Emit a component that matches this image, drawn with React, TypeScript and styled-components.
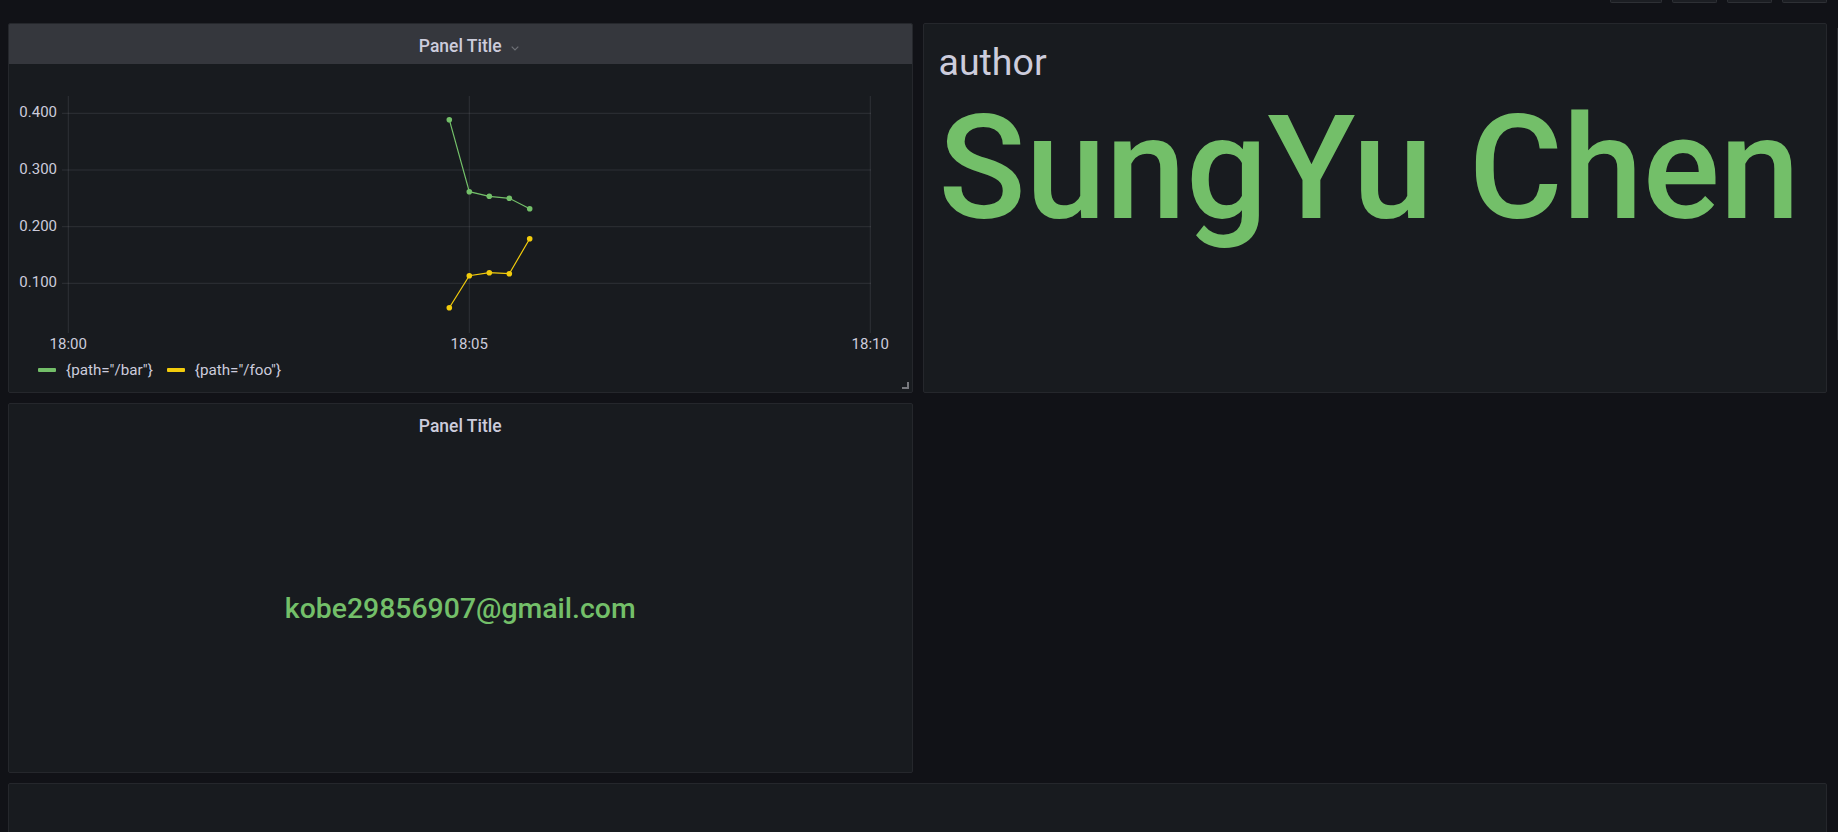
import React from "react";
import styled, { createGlobalStyle } from "styled-components";

const GlobalStyle = createGlobalStyle`
  html, body {
    margin: 0;
    padding: 0;
    background: #111217;
    overflow: hidden;
    font-family: Roboto, "Liberation Sans", sans-serif;
    color: #ccccdc;
  }
`;

const Page = styled.div`
  position: relative;
  width: 1838px;
  height: 832px;
  box-sizing: border-box;
  padding: 0 11px 0 8px;
  overflow: hidden;
`;

const Toolbar = styled.div`
  display: flex;
  justify-content: flex-end;
  gap: 10px;
  height: 3px;
  margin-bottom: 20px;
`;

const ToolButton = styled.div<{ $w: number }>`
  width: ${(p) => p.$w}px;
  height: 3px;
  box-sizing: border-box;
  background: #1c1e23;
  border: 1px solid #2e3035;
  border-top: none;
  border-radius: 0 0 2px 2px;
`;

const ScrollThumb = styled.div`
  position: absolute;
  right: 0;
  top: 28px;
  width: 1px;
  height: 312px;
  background: #2a2c31;
`;

const Grid = styled.div`
  display: grid;
  grid-template-columns: 1fr 1fr;
  grid-auto-rows: 370px;
  gap: 10px;
`;

const Panel = styled.div<{ $span?: number }>`
  position: relative;
  grid-column: span ${(p) => p.$span ?? 1};
  display: flex;
  flex-direction: column;
  box-sizing: border-box;
  background: #181b1f;
  border: 1px solid #25272c;
  border-radius: 2px;
  overflow: hidden;
`;

const PanelHeader = styled.div<{ $hover?: boolean }>`
  flex: none;
  height: 40px;
  box-sizing: border-box;
  padding-top: 5px;
  display: flex;
  align-items: center;
  justify-content: center;
  background: ${(p) => (p.$hover ? "#35373d" : "transparent")};
`;

const PanelTitle = styled.span`
  position: relative;
  font-size: 17.5px;
  font-weight: 500;
  color: #ccccdc;
  line-height: 1;
`;

const Chevron = styled.svg`
  position: absolute;
  left: calc(100% + 9px);
  top: 50%;
  margin-top: -1px;
`;

const ChartBody = styled.div`
  flex: 1;
  display: flex;
  flex-direction: column;
  padding: 10px;
`;

const Plot = styled.svg`
  flex: none;
  width: 100%;
  height: 284px;
  display: block;
`;

const Legend = styled.div`
  flex: none;
  height: 24px;
  display: flex;
  align-items: center;
  gap: 14px;
  padding-left: 19px;
`;

const LegendItem = styled.div`
  display: flex;
  align-items: center;
  gap: 10px;
  font-size: 15.2px;
  color: #ccccdc;
`;

const LegendSwatch = styled.span<{ $color: string }>`
  width: 18px;
  height: 4px;
  border-radius: 1px;
  background: ${(p) => p.$color};
`;

const ResizeHandle = styled.div`
  position: absolute;
  right: 3px;
  bottom: 3px;
  width: 7px;
  height: 7px;
  box-sizing: border-box;
  border-right: 2px solid #77787d;
  border-bottom: 2px solid #77787d;
`;

const StatBody = styled.div`
  display: flex;
  flex-direction: column;
  padding: 16px 13px 0 15px;
`;

const StatLabel = styled.div`
  font-size: 37.5px;
  line-height: 45px;
  color: #ccccdc;
`;

const StatValue = styled.div`
  margin-top: 12px;
  font-size: 144px;
  font-weight: 500;
  line-height: 1;
  color: #73bf69;
  white-space: nowrap;
`;

const TextBody = styled.div`
  flex: 1;
  display: flex;
  align-items: center;
  justify-content: center;
`;

const Email = styled.div`
  font-size: 28.4px;
  font-weight: 500;
  color: #73bf69;
`;

const GREEN = "#73bf69";
const YELLOW = "#f2cc0c";

const gridYs = [39.3, 96, 152.7, 209.3];
const yLabels = ["0.400", "0.300", "0.200", "0.100"];
const gridXs = [49.3, 450.3, 851.3];
const xLabels = ["18:00", "18:05", "18:10"];

const greenPts: [number, number][] = [
  [430.3, 45.7],
  [450.3, 117.7],
  [470.3, 122.3],
  [490.3, 124.3],
  [510.7, 134.7],
];
const yellowPts: [number, number][] = [
  [430.3, 233.7],
  [450.3, 201.7],
  [470.3, 198.7],
  [490.3, 199.7],
  [510.7, 164.7],
];

const Series: React.FC<{ pts: [number, number][]; color: string }> = ({ pts, color }) => (
  <g>
    <polyline
      points={pts.map((p) => p.join(",")).join(" ")}
      fill="none"
      stroke={color}
      strokeWidth={1.2}
    />
    {pts.map(([x, y], i) => (
      <circle key={i} cx={x} cy={y} r={2.8} fill={color} />
    ))}
  </g>
);

const TimeSeries: React.FC = () => (
  <Plot>
    {gridYs.map((y, i) => (
      <g key={`y${i}`}>
        <line x1={43} x2={852} y1={y} y2={y} stroke="rgba(204,204,220,0.12)" strokeWidth={1} />
        <text
          x={38}
          y={y}
          textAnchor="end"
          dominantBaseline="middle"
          fontSize={15}
          fontFamily="Roboto, sans-serif"
          fill="#ccccdc"
        >
          {yLabels[i]}
        </text>
      </g>
    ))}
    {gridXs.map((x, i) => (
      <g key={`x${i}`}>
        <line x1={x} x2={x} y1={22} y2={259} stroke="rgba(204,204,220,0.12)" strokeWidth={1} />
        <text
          x={x}
          y={271}
          textAnchor="middle"
          dominantBaseline="middle"
          fontSize={15}
          fontFamily="Roboto, sans-serif"
          fill="#ccccdc"
        >
          {xLabels[i]}
        </text>
      </g>
    ))}
    <Series pts={greenPts} color={GREEN} />
    <Series pts={yellowPts} color={YELLOW} />
  </Plot>
);

export default function App() {
  return (
    <>
      <GlobalStyle />
      <Page>
        <Toolbar>
          <ToolButton $w={52} />
          <ToolButton $w={45} />
          <ToolButton $w={45} />
          <ToolButton $w={45} />
        </Toolbar>
        <Grid>
          <Panel>
            <PanelHeader $hover>
              <PanelTitle>
                Panel Title
                <Chevron width="8" height="5" viewBox="0 0 8 5">
                  <path d="M0.7 0.7 L4 4 L7.3 0.7" fill="none" stroke="#6e7076" strokeWidth="1.2" />
                </Chevron>
              </PanelTitle>
            </PanelHeader>
            <ChartBody>
              <TimeSeries />
              <Legend>
                <LegendItem>
                  <LegendSwatch $color={GREEN} />
                  {'{path="/bar"}'}
                </LegendItem>
                <LegendItem>
                  <LegendSwatch $color={YELLOW} />
                  {'{path="/foo"}'}
                </LegendItem>
              </Legend>
            </ChartBody>
            <ResizeHandle />
          </Panel>
          <Panel>
            <StatBody>
              <StatLabel>author</StatLabel>
              <StatValue>SungYu Chen</StatValue>
            </StatBody>
          </Panel>
          <Panel>
            <PanelHeader>
              <PanelTitle>Panel Title</PanelTitle>
            </PanelHeader>
            <TextBody>
              <Email>kobe29856907@gmail.com</Email>
            </TextBody>
          </Panel>
          <div />
          <Panel $span={2} />
        </Grid>
        <ScrollThumb />
      </Page>
    </>
  );
}
